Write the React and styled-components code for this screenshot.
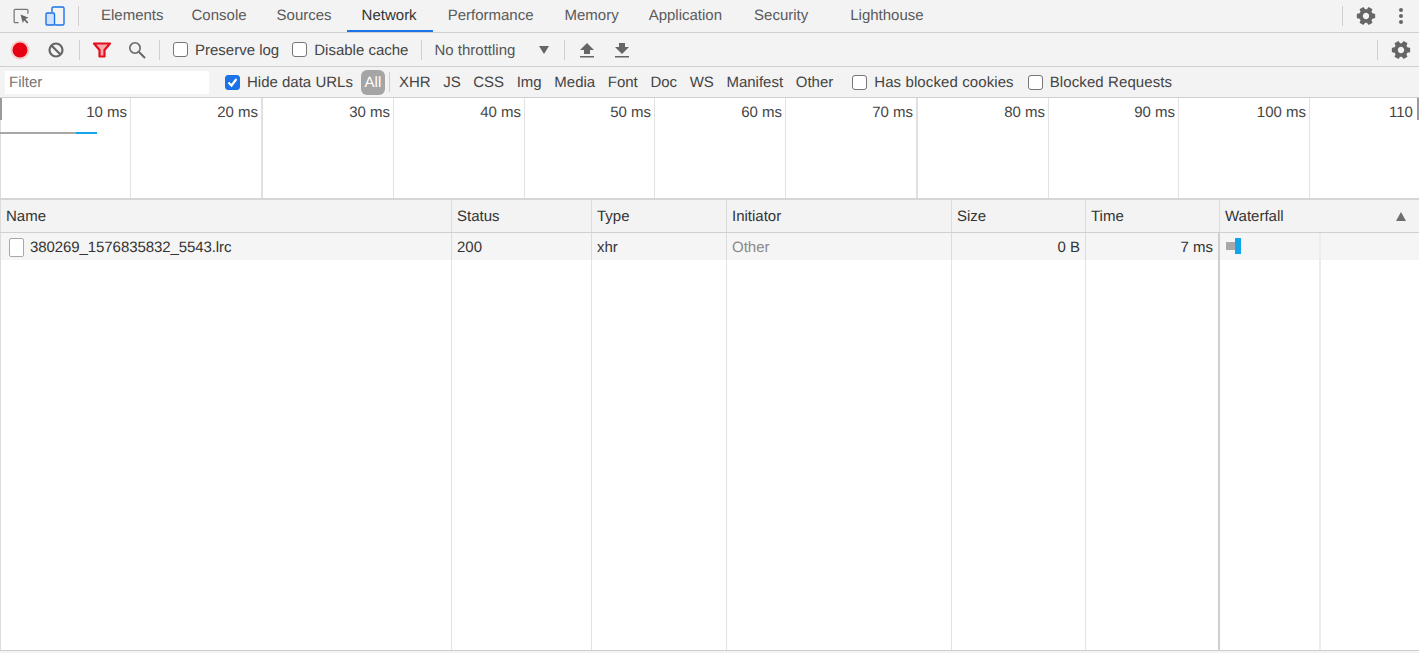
import React from "react";
import styled, { createGlobalStyle } from "styled-components";

const Global = createGlobalStyle`
  html, body { margin: 0; padding: 0; height: 100%; background: #fff; overflow: hidden; }
  #root { height: 100%; }
`;

const Page = styled.div`
  width: 1419px; height: 653px; overflow: hidden;
  display: flex; flex-direction: column;
  font-family: "Liberation Sans", Arial, sans-serif;
  font-size: 15px; color: #333; background: #fff;
  text-rendering: geometricPrecision;
`;
const Bar = styled.div`
  height: ${p => p.$h}px; flex: none; box-sizing: border-box;
  display: flex; align-items: center;
  background: #f3f3f3;
  border-bottom: 1px solid #cfcfcf;
  padding-left: ${p => p.$pl || 0}px;
`;
const Slot = styled.div`
  width: ${p => p.$w}px; height: 100%; flex: none;
  display: flex; align-items: center; justify-content: center;
`;
const Sep = styled.div`
  width: 1px; height: 20px; flex: none; background: #cfcfcf;
  margin: 0 ${p => p.$mr ?? 7}px 0 ${p => p.$ml ?? 7}px;
`;
const Spacer = styled.div`flex: 1;`;
const Tabs = styled.div`display: flex; height: 100%;`;
const Tab = styled.div`
  box-sizing: border-box; height: 32px;
  padding: 1px ${p => p.$pr ?? 15}px 0 15px;
  display: flex; align-items: center;
  color: ${p => (p.$active ? "#333" : "#5a5a5a")};
  border-bottom: 2px solid ${p => (p.$active ? "#1a73e8" : "transparent")};
  margin-bottom: -1px;
`;
const CheckLabel = styled.label`
  display: flex; align-items: center; gap: 7px; flex: none;
  color: #444; margin-left: ${p => p.$ml || 0}px;
  letter-spacing: ${p => (p.$wide ? ".1px" : "normal")};
`;
const LabelText = styled.span`padding-top: 2px;`;
const Box = styled.span`
  width: 15px; height: 15px; box-sizing: border-box; border-radius: 3px; flex: none;
  border: 1px solid ${p => (p.$on ? "#1a73e8" : "#767676")};
  background: ${p => (p.$on ? "#1a73e8" : "#fff")};
  display: flex; align-items: center; justify-content: center;
`;
const Throttle = styled.div`
  display: flex; align-items: center; color: #555; flex: none; width: 115px;
  padding-top: 1px; justify-content: space-between;
`;
const Caret = styled.span`
  width: 0; height: 0; flex: none;
  border-left: 5px solid transparent; border-right: 5px solid transparent;
  border-top: 8px solid #666;
`;
const FilterInput = styled.div`
  width: 204px; height: 23px; margin-right: 16px; flex: none; box-sizing: border-box;
  background: #fff; color: #757575; padding-left: 4px;
  display: flex; align-items: center;
`;
const Pill = styled.div`
  width: 24px; height: 25px; margin-left: 8px; border-radius: 6px; flex: none;
  background: #a5a5a5; color: #fff;
  display: flex; align-items: center; justify-content: center;
`;
const Types = styled.div`display: flex; gap: 12.6px; flex: none; color: #444;`;

const Overview = styled.div`
  height: 102px; flex: none; display: flex; overflow: hidden; position: relative;
  background: #fff; border-bottom: 2px solid #d6d6d6; box-sizing: border-box;
  box-shadow: inset 1px 0 0 #dcdcdc;
`;
const Tick = styled.div`
  flex: none; box-sizing: border-box; height: 100%;
  border-right: ${p => (p.$thick ? "2px solid #e0e0e0" : "1px solid #e2e2e2")};
  text-align: right; padding: 6px 3px 0 0; color: #444;
`;
const Handle = styled.div`
  position: absolute; top: 0; width: 2px; height: 22px; background: #9a9a9a;
  ${p => (p.$right ? "right: 0;" : "left: 0;")}
`;
const Trace = styled.div`
  position: absolute; top: 34px; left: 0; height: 2px; width: 97px;
  background: linear-gradient(to right, #a8a8a8 76px, #12a5ea 76px);
`;

const COLS = "452px 140px 135px 225px 134px 134px 199px";
const GridRow = styled.div`
  display: grid; grid-template-columns: ${COLS}; flex: none;
  height: ${p => p.$h}px; box-sizing: border-box; background: ${p => p.$bg};
  border-bottom: ${p => (p.$line ? "1px solid #d0d0d0" : "none")};
  box-shadow: inset 1px 0 0 #dcdcdc;
`;
const Cell = styled.div`
  box-sizing: border-box; display: flex; align-items: center; gap: 6px;
  justify-content: ${p => (p.$end ? "flex-end" : "flex-start")};
  padding: 0 5px 0 ${p => p.$pl ?? 5}px;
  border-right: 1px solid #dcdcdc; color: ${p => p.$c || "#333"};
  &:last-child { border-right: none; }
  ${p => p.$wf && "border-right: 2px solid #cfcfcf;"}
`;
const DataCell = styled(Cell)`padding-top: 2px;`;
const FileName = styled.span`letter-spacing: -.08px;`;
const FillerRow = styled(GridRow)`flex: 1; height: auto;`;
const FillCell = styled.div`
  border-right: 1px solid #e2e2e2; box-sizing: border-box;
  ${p => p.$wf && "border-right: 2px solid #cfcfcf;"}
  &:last-child { border-right: none; display: flex; padding-left: 99px; }
`;
const WfLine = styled.div`width: 2px; height: 100%; background: #ececec;`;
const RowWf = styled.div`
  position: relative; height: 100%; overflow: hidden;
  display: flex; padding-left: 99px;
`;
const FileIcon = styled.span`
  width: 15px; height: 19px; box-sizing: border-box; flex: none; background: #fff;
  border: 1px solid #a8a8a8; border-radius: 2px; margin-left: 3px;
`;
const Sort = styled.span`
  margin-left: auto; margin-right: 8px; width: 0; height: 0;
  border-left: 5.5px solid transparent; border-right: 5.5px solid transparent;
  border-bottom: 9px solid #6e6e6e;
`;
const BarGrey = styled.div`position: absolute; left: 6px; top: 9px; width: 9px; height: 8px; background: #a8a8a8;`;
const BarBlue = styled.div`position: absolute; left: 15px; top: 5px; width: 6px; height: 16px; background: #12a5ea;`;
const Foot = styled.div`
  height: 3px; flex: none; background: #f3f3f3; border-top: 1px solid #cfcfcf; box-sizing: border-box;
`;

const Gear = () => (
  <svg width="22" height="22" viewBox="0 0 24 24" fill="#666">
    <path transform="rotate(90 12 12)" d="M19.43 12.98c.04-.32.07-.64.07-.98s-.03-.66-.07-.98l2.11-1.65c.19-.15.24-.42.12-.64l-2-3.46c-.12-.22-.39-.3-.61-.22l-2.49 1c-.52-.4-1.08-.73-1.69-.98l-.38-2.65C14.46 2.18 14.25 2 14 2h-4c-.25 0-.46.18-.49.42l-.38 2.65c-.61.25-1.17.59-1.69.98l-2.49-1c-.23-.09-.49 0-.61.22l-2 3.46c-.13.22-.07.49.12.64l2.11 1.65c-.04.32-.07.65-.07.98s.03.66.07.98l-2.11 1.65c-.19.15-.24.42-.12.64l2 3.46c.12.22.39.3.61.22l2.49-1c.52.4 1.08.73 1.69.98l.38 2.65c.03.24.24.42.49.42h4c.25 0 .46-.18.49-.42l.38-2.65c.61-.25 1.17-.59 1.69-.98l2.49 1c.23.09.49 0 .61-.22l2-3.46c.12-.22.07-.49-.12-.64l-2.11-1.65zM12 15.5c-1.93 0-3.5-1.57-3.5-3.5s1.57-3.5 3.5-3.5 3.5 1.57 3.5 3.5-1.57 3.5-3.5 3.5z" />
  </svg>
);
const Inspect = () => (
  <svg width="17" height="17" viewBox="0 0 18 18" fill="none">
    <path d="M6 15.5H2.2a1 1 0 0 1-1-1V2.5a1 1 0 0 1 1-1h12.6a1 1 0 0 1 1 1V6" stroke="#777" strokeWidth="1.3" />
    <path d="M8 7l8.5 3.4-3.4 1.3 3.2 3.6-1.3 1.2-3.3-3.6-1.3 3.2z" fill="#666" />
  </svg>
);
const Device = () => (
  <svg width="20" height="20" viewBox="0 0 20 20" fill="none" stroke="#1a73e8" strokeWidth="1.4">
    <path d="M7 6V2a1.2 1.2 0 0 1 1.2-1h9.6A1.2 1.2 0 0 1 19 2v16a1.2 1.2 0 0 1-1.2 1H10" />
    <rect x="1" y="7" width="8.5" height="12" rx="1.2" fill="#cfe2fb" />
  </svg>
);
const Record = () => (
  <svg width="20" height="20" viewBox="0 0 20 20">
    <circle cx="10" cy="10" r="9.5" fill="#f3b0b0" opacity=".6" />
    <circle cx="10" cy="10" r="7.5" fill="#e60012" />
  </svg>
);
const Block = () => (
  <svg width="18" height="18" viewBox="0 0 18 18" fill="none" stroke="#666" strokeWidth="2.2">
    <circle cx="9" cy="9" r="6.5" />
    <path d="M4.5 4.5l9 9" />
  </svg>
);
const Funnel = () => (
  <svg width="20" height="18" viewBox="0 0 20 18" fill="none" stroke="#e0101f" strokeWidth="2.2" strokeLinejoin="round">
    <path d="M2 2.5h16l-5.5 6.5v6.5h-5V9z" fill="#f7a9ae" />
  </svg>
);
const Search = () => (
  <svg width="18" height="18" viewBox="0 0 18 18" fill="none" stroke="#666" strokeWidth="1.6">
    <circle cx="7" cy="7" r="5.2" />
    <path d="M11 11l6 6" strokeWidth="2" />
  </svg>
);
const Upload = () => (
  <svg width="14" height="16" viewBox="0 0 14 16" fill="#666">
    <path d="M7 1L14 8H10V12H4V8H0z" />
    <rect y="14" width="14" height="1.5" />
  </svg>
);
const Download = () => (
  <svg width="14" height="16" viewBox="0 0 14 16" fill="#666">
    <path d="M7 12L14 5H10V1H4V5H0z" />
    <rect y="14" width="14" height="1.5" />
  </svg>
);
const Kebab = () => (
  <svg width="6" height="18" viewBox="0 0 6 18" fill="#666">
    <circle cx="3" cy="3" r="2" /><circle cx="3" cy="9" r="2" /><circle cx="3" cy="15" r="2" />
  </svg>
);
const Check = () => (
  <svg width="11" height="11" viewBox="0 0 11 11" fill="none" stroke="#fff" strokeWidth="2.2">
    <path d="M1.5 5.5l3 3 5-6.5" />
  </svg>
);

const tabs = [
  ["Elements", 13], ["Console", 15], ["Sources", 15], ["Network", 16], ["Performance", 16],
  ["Memory", 15], ["Application", 17], ["Security", 27], ["Lighthouse", 15],
];
const types = ["XHR", "JS", "CSS", "Img", "Media", "Font", "Doc", "WS", "Manifest", "Other"];
const ticks = [
  ["10 ms", 131], ["20 ms", 132, true], ["30 ms", 131], ["40 ms", 131], ["50 ms", 130], ["60 ms", 131],
  ["70 ms", 132, true], ["80 ms", 131], ["90 ms", 130], ["100 ms", 131], ["110 ms", 131],
];

export default function App() {
  return (
    <Page>
      <Global />
      <Bar $h={33} $pl={4}>
        <Slot $w={34}><Inspect /></Slot>
        <Slot $w={33}><Device /></Slot>
        <Sep $ml={7} $mr={7} />
        <Tabs>
          {tabs.map(([t, pr]) => (
            <Tab key={t} $active={t === "Network"} $pr={pr}>{t}</Tab>
          ))}
        </Tabs>
        <Spacer />
        <Sep $ml={0} $mr={5} />
        <Slot $w={35}><Gear /></Slot>
        <Slot $w={36}><Kebab /></Slot>
      </Bar>
      <Bar $h={34} $pl={2}>
        <Slot $w={36}><Record /></Slot>
        <Slot $w={36}><Block /></Slot>
        <Sep $ml={5} $mr={4} />
        <Slot $w={35}><Funnel /></Slot>
        <Slot $w={35}><Search /></Slot>
        <Sep $ml={5} $mr={13} />
        <CheckLabel><Box /><LabelText>Preserve log</LabelText></CheckLabel>
        <CheckLabel $ml={13}><Box /><LabelText>Disable cache</LabelText></CheckLabel>
        <Sep $ml={13} $mr={12} />
        <Throttle>No throttling<Caret /></Throttle>
        <Sep $ml={15} $mr={4} />
        <Slot $w={35}><Upload /></Slot>
        <Slot $w={35}><Download /></Slot>
        <Spacer />
        <Sep $ml={0} $mr={5} />
        <Slot $w={36}><Gear /></Slot>
      </Bar>
      <Bar $h={31} $pl={5}>
        <FilterInput>Filter</FilterInput>
        <CheckLabel><Box $on><Check /></Box>Hide data URLs</CheckLabel>
        <Pill>All</Pill>
        <Sep $ml={4} $mr={9} />
        <Types>{types.map(t => <span key={t}>{t}</span>)}</Types>
        <CheckLabel $ml={19} $wide><Box />Has blocked cookies</CheckLabel>
        <CheckLabel $ml={14} $wide><Box />Blocked Requests</CheckLabel>
      </Bar>
      <Overview>
        {ticks.map(([label, w, thick]) => <Tick key={label} $thick={thick} style={{ width: w }}>{label}</Tick>)}
        <Handle />
        <Handle $right />
        <Trace />
      </Overview>
      <GridRow $h={33} $bg="#f3f3f3" $line>
        <Cell $pl={6}>Name</Cell>
        <Cell>Status</Cell>
        <Cell>Type</Cell>
        <Cell>Initiator</Cell>
        <Cell>Size</Cell>
        <Cell>Time</Cell>
        <Cell>Waterfall<Sort /></Cell>
      </GridRow>
      <GridRow $h={27} $bg="#f5f5f5">
        <DataCell $pl={6}><FileIcon /><FileName>380269_1576835832_5543.lrc</FileName></DataCell>
        <DataCell>200</DataCell>
        <DataCell>xhr</DataCell>
        <DataCell $c="#888">Other</DataCell>
        <DataCell $end>0 B</DataCell>
        <DataCell $end $wf>7 ms</DataCell>
        <RowWf><BarGrey /><BarBlue /><WfLine /></RowWf>
      </GridRow>
      <FillerRow $bg="#fff">
        <FillCell /><FillCell /><FillCell /><FillCell /><FillCell /><FillCell $wf />
        <FillCell><WfLine /></FillCell>
      </FillerRow>
      <Foot />
    </Page>
  );
}
